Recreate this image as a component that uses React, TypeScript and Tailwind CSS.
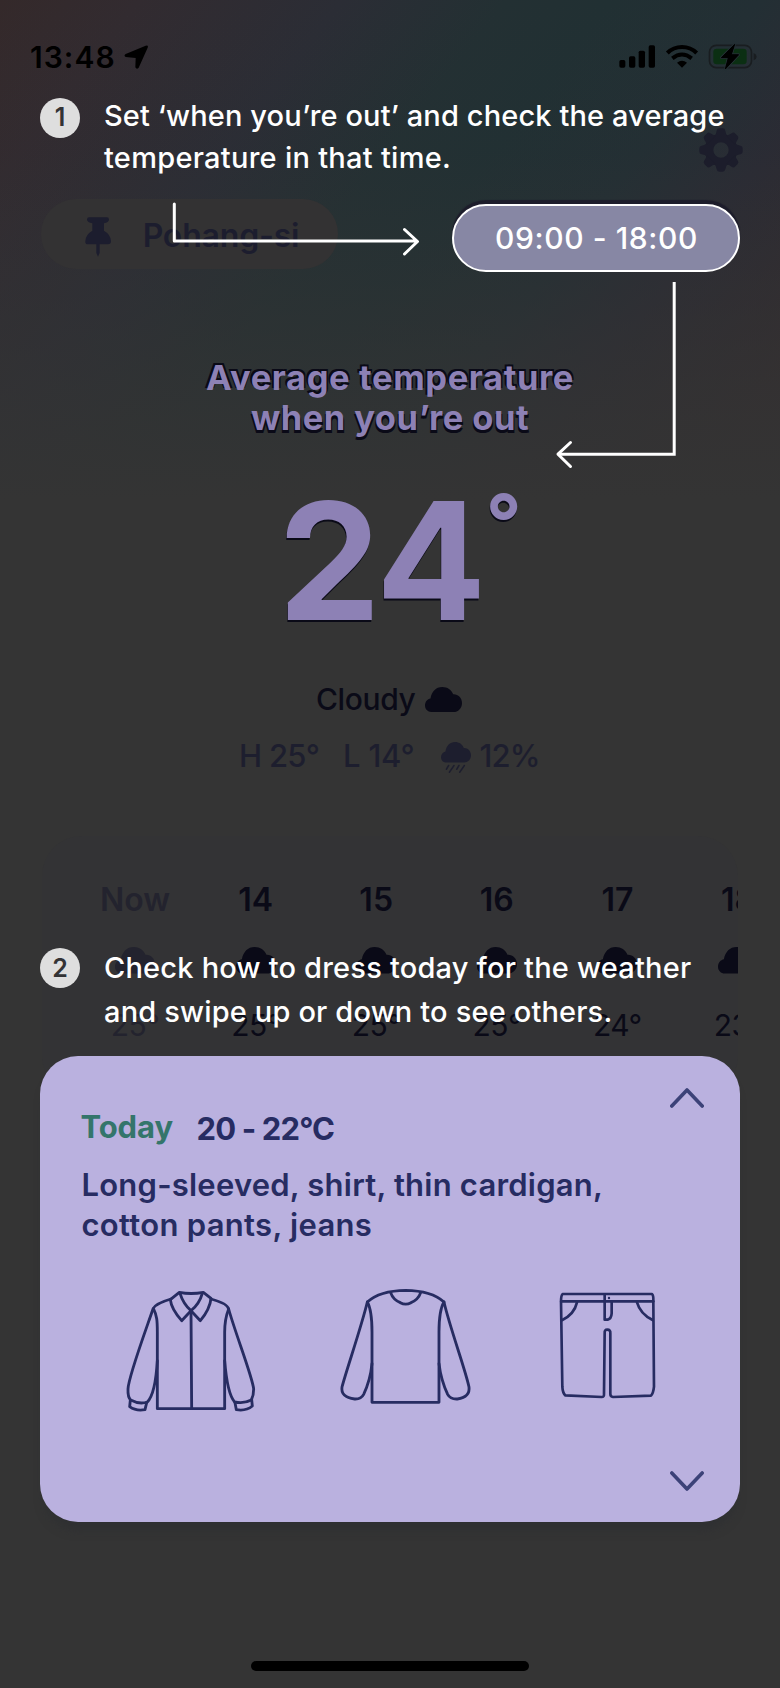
import type { ReactNode } from "react";

const CLOUD =
  "M21 82C9 82 0 73 0 61 0 49 8 40 18 38 22 15 36 0 57 0 74 0 87 9 93 24 109 23 122 36 122 53 122 70 109 82 94 82Z";

function Cloud({ className }: { className?: string }) {
  return (
    <svg viewBox="0 0 122 82" className={className} fill="currentColor" preserveAspectRatio="none">
      <path d={CLOUD} />
    </svg>
  );
}

function LocationArrow() {
  return (
    <svg viewBox="369 136 74 73" className="h-[24.3px] w-[24.7px] shrink-0" fill="#000">
      <path d="M434 138Q443 135 440 144L413 204Q407 211 403 203L404 175 374 172Q367 168 374 163Z" />
    </svg>
  );
}

function StatusIcons() {
  return (
    <svg viewBox="682 130 420 82" className="h-[27.33px] w-[140px] shrink-0">
      <g fill="#000">
        <rect x="686" y="181" width="18" height="23" rx="5" />
        <rect x="715" y="170" width="19" height="34" rx="5" />
        <rect x="744" y="153" width="19" height="51" rx="5" />
        <rect x="774" y="137" width="19" height="67" rx="5" />
      </g>
      <g fill="none" stroke="#000" strokeWidth="12">
        <path d="M830 160C854 136 894 136 918 160" />
        <path d="M845 176Q874 153 903 176" />
      </g>
      <path d="M859 189Q874 178 889 189L874 204Z" fill="#000" />
      <rect x="956.500" y="137" width="126" height="67" rx="20" fill="none" stroke="#191d20" strokeWidth="5" />
      <path d="M1089 160Q1098 164 1098 171 1098 178 1089 182Z" fill="#191d20" />
      <rect x="968" y="147" width="100" height="47" rx="10" fill="#0b2f13" />
      <path
        d="M1032 134L992 174H1013L1004 208 1044 165H1022Z"
        fill="#000"
        stroke="#232f33"
        strokeWidth="8"
        paintOrder="stroke"
        strokeLinejoin="round"
      />
      <path d="M1032 134L992 174H1013L1004 208 1044 165H1022Z" fill="#000" stroke="#000" strokeWidth="2.500" strokeLinejoin="round" />
    </svg>
  );
}

const TEETH = [0, 45, 90, 135, 180, 225, 270, 315];

function Gear() {
  return (
    <svg viewBox="-66 -66 132 132" className="size-[44px]" fill="#1c1d2b">
      <path fillRule="evenodd" d="M0-48A48 48 0 1 1 0 48A48 48 0 1 1 0-48ZM0-23A23 23 0 1 0 0 23A23 23 0 1 0 0-23Z" />
      {TEETH.map((a) => (
        <path key={a} transform={`rotate(${a})`} d="M-20-42Q-14-48-13-58-12-65-5-65H5Q12-65 13-58 14-48 20-42Z" />
      ))}
    </svg>
  );
}

function Pin() {
  return (
    <svg viewBox="256 650 79 120" className="h-[40px] w-[26.33px]" fill="#1c1d2e">
      <path d="M268 651H322Q328 651 328 658 327 666 313 669V691Q334 703 334 723 334 732 325 732H300V758L295 769 290 758V732H265Q256 732 257 723 257 703 278 691V669Q263 666 262 658 262 651 268 651Z" />
    </svg>
  );
}

function Shirt() {
  return (
    <svg viewBox="78 88 390 368" className="h-[122.67px] w-[130px]" fill="none" stroke="#272c62" strokeWidth="8.500" strokeLinejoin="round" strokeLinecap="round">
      <path d="M238 95Q273 102 310 95L333 113 Q330 145 301 180L273 150 245 180Q214 145 211 117Z" />
      <path d="M240 98Q250 130 273 150Q298 130 307 98" />
      <path d="M213 115Q168 128 160 143C171 165 172 180 172 215V444H374V215C374 180 378 165 386 145Q382 128 333 115" />
      <path d="M273 150L275 442" />
      <path d="M159 145C135 215 85 350 84 385Q83 410 92 418Q118 432 142 424Q166 400 172 300" />
      <path d="M386 145C405 215 458 350 461 385Q461 405 454 418Q432 430 404 424Q382 400 374 300" />
      <path d="M91 418L89 438Q108 452 135 447L140 426" />
      <path d="M455 417L457 436Q438 452 409 447L405 426" />
    </svg>
  );
}

function LongSleeve() {
  return (
    <svg viewBox="718 80 400 356" className="h-[118.67px] w-[133.33px]" fill="none" stroke="#272c62" strokeWidth="8.500" strokeLinejoin="round" strokeLinecap="round">
      <path d="M803 125Q840 91 918 90Q996 91 1033 125Q1018 150 1018 215V426H817V215Q817 150 803 125Z" />
      <path d="M873 97Q880 118 902 127Q918 136 934 127Q956 118 963 97" />
      <path d="M803 125C785 200 740 330 727 380Q722 410 765 416Q784 417 792 402Q812 360 817 310" />
      <path d="M1033 125C1050 200 1098 330 1108 380Q1112 410 1073 416Q1052 417 1044 402Q1024 360 1018 310" />
    </svg>
  );
}

function Pants() {
  return (
    <svg viewBox="176 96 292 320" className="h-[106.67px] w-[97.33px]" fill="none" stroke="#272c62" strokeWidth="8" strokeLinejoin="round" strokeLinecap="round">
      <path d="M187 102H455Q460 106 459 124L461 380Q459 400 452 407L338 411Q330 410 330 402V220Q331 209 321 209 312 209 313 220L311 402Q312 411 304 411L195 406Q187 400 186 380L182 124Q182 106 187 102Z" />
      <path d="M183 124H459" />
      <path d="M313 104V179H322Q333 176 334 160V124" />
      <path d="M230 127Q222 162 186 180M410 127Q420 162 457 180" />
      <circle cx="326" cy="114" r="3.500" fill="#272c62" stroke="none" />
    </svg>
  );
}

function Chevron({ down }: { down?: boolean }) {
  return (
    <svg viewBox="0 0 34 20" className="h-[20px] w-[34px]" fill="none" stroke="#3c4278" strokeWidth="3.600" strokeLinecap="round" strokeLinejoin="round">
      <path d={down ? "M1.800 2L17 18 32.200 2" : "M1.800 18L17 2 32.200 18"} />
    </svg>
  );
}

function Step({ n, className, children }: { n: number; className: string; children: ReactNode }) {
  return (
    <div className={`flex items-start text-[29px] font-medium text-white ${className}`}>
      <span className="mt-[2.700px] mr-[24px] flex size-[40px] shrink-0 items-center justify-center rounded-full bg-[#dedede] text-[25px] leading-none font-semibold text-[#333335]">
        {n}
      </span>
      <p className="whitespace-nowrap">{children}</p>
    </div>
  );
}

const HOURS = [
  { label: "Now", temp: "25°" },
  { label: "14", temp: "25°" },
  { label: "15", temp: "25°" },
  { label: "16", temp: "25°" },
  { label: "17", temp: "24°" },
  { label: "18", temp: "23°" },
];

export default function App() {
  return (
    <div className="relative flex h-[1688px] w-[780px] flex-col overflow-hidden bg-[linear-gradient(to_bottom,transparent_0px,rgba(52,52,52,0.05)_150px,rgba(52,52,52,0.35)_270px,rgba(52,52,52,0.75)_400px,#343434_500px),linear-gradient(128deg,#34292a_0px,#322b30_110px,#2b2d35_270px,#233033_400px,#213033_480px,#232f34_600px,#2a2b34_700px,#322a2d_850px)] bg-[#343434] font-['Inter',sans-serif]">
      {/* Status bar */}
      <header className="flex h-[80px] shrink-0 items-start justify-between pr-[22px] pl-[30px] pt-[37px]">
        <div className="flex items-start text-[30px] leading-[40px] font-semibold tracking-[1.05px] text-black">
          13:48
          <span className="mt-[8px] ml-[8px]">
            <LocationArrow />
          </span>
        </div>
        <span className="mt-[6.300px] flex">
          <StatusIcons />
        </span>
      </header>

      <div className="flex h-[119px] shrink-0 justify-end pt-[47.500px] pr-[37.500px]">
        <Gear />
      </div>

      {/* Location and outing hours */}
      <div className="flex h-[76px] shrink-0 items-start justify-between pr-[40px] pl-[41px]">
        <div className="flex h-[70px] w-[297px] items-start rounded-[35px] bg-[#333233] pl-[44px] text-[32px] leading-[40px] font-semibold tracking-[-0.180px] text-[#1c1d2e]">
          <span className="mt-[17.500px] flex">
            <Pin />
          </span>
          <span className="mt-[17px] ml-[31.300px]">Pohang-si</span>
        </div>
        <div className="mt-[5px] flex h-[68px] w-[288px] justify-center rounded-full border-2 border-white bg-[#8787a4] pl-[1px] text-[30px] leading-[64px] font-medium tracking-[0.600px] text-white shadow-[0_-4px_1px_#1d1d2b]">
          09:00 - 18:00
        </div>
      </div>

      {/* Average temperature */}
      <h1 className="mt-[82.500px] flex h-[80px] shrink-0 flex-col items-center text-[34.500px] leading-[40px] font-bold whitespace-nowrap text-[#8d81b5]">
        <span className="tracking-[0.620px] [text-shadow:-2px_-2px_0_#0a0a17,1.500px_-2px_0_#0a0a17]">Average temperature</span>
        <span className="tracking-[0.450px] [text-shadow:1px_2.800px_0_#0a0a17,-1px_2.500px_0_#0a0a17]">when you’re out</span>
      </h1>
      <div className="mt-[41px] flex h-[163px] shrink-0 items-start pl-[278px] font-bold text-[#8d81b5] [text-shadow:-0.500px_1.800px_0_#0a0a17]">
        <span className="text-[163px] leading-[163px] tracking-[-2.100px]">24</span>
        <span className="mt-[4px] ml-[1.500px] text-[78px] leading-[78px]">°</span>
      </div>

      {/* Conditions */}
      <div className="mt-[37.500px] flex h-[40px] shrink-0 items-start pl-[316px] text-[30px] leading-[40px] font-medium tracking-[-0.400px] text-[#0a0a17]">
        Cloudy
        <Cloud className="mt-[8px] ml-[10px] h-[25px] w-[37px]" />
      </div>
      <div className="mt-[16.500px] flex h-[40px] shrink-0 items-start pl-[239px] text-[31px] leading-[40px] font-medium text-[#1d1e2e]">
        <span className="w-[104px] tracking-[-0.700px]">H 25°</span>
        <span className="w-[98px] tracking-[-0.200px]">L 14°</span>
        <svg viewBox="0 0 122 124" className="mt-[6px] h-[31px] w-[30px]" fill="currentColor" preserveAspectRatio="none">
          <path d={CLOUD} />
          <path d="M31 94L22 109M53 94L34 121M73 94L64 109M95 94L76 121" stroke="currentColor" strokeWidth="6" strokeLinecap="round" />
        </svg>
        <span className="ml-[8.500px] tracking-[-0.900px]">12%</span>
      </div>

      {/* Hourly forecast */}
      <section className="mt-[60.500px] ml-[42px] h-[260px] w-[696px] shrink-0 overflow-hidden rounded-[40px] bg-[#333335] pt-[43.500px] pl-[32.700px]">
        <div className="flex w-[724px]">
          {HOURS.map(({ label, temp }, i) => (
            <div key={label} className={`flex w-[120.600px] shrink-0 flex-col items-center ${i === 0 ? "text-[#23232e]" : "text-[#0a0a17]"}`}>
              <span className="text-[32px] leading-[40px] font-semibold">{label}</span>
              <Cloud className="mt-[27.500px] h-[26.500px] w-[40px]" />
              <span className="mt-[31px] text-[30px] leading-[40px] tracking-[-0.500px]">{temp}</span>
            </div>
          ))}
        </div>
      </section>

      {/* Outfit card */}
      <section className="relative -mt-[40px] ml-[40px] flex h-[466px] w-[700px] shrink-0 flex-col rounded-[38px] bg-[#bab1df] text-[31px] leading-[40px] font-semibold text-[#272c62] shadow-[0_12px_10px_-4px_#2f3032]">
        <div className="flex h-[51px] justify-end pt-[31.500px] pr-[36px]">
          <Chevron />
        </div>
        <div className="flex h-[58px] pl-[40.500px]">
          <span className="w-[116px] font-bold tracking-[-0.100px] text-[#34756b]">Today</span>
          <span className="mt-[2px] font-bold tracking-[-0.850px]">20 - 22°C</span>
        </div>
        <p className="h-[80px] pl-[41.500px] tracking-[0.220px]">
          Long-sleeved, shirt, thin cardigan,
          <br />
          <span className="tracking-[0.300px]">cotton pants, jeans</span>
        </p>
        <div className="mt-[44.500px] flex h-[128.500px] items-start pl-[86px]">
          <span className="w-[213.300px]">
            <Shirt />
          </span>
          <span className="-mt-[2.700px] w-[219.300px]">
            <LongSleeve />
          </span>
          <span className="pt-[2.500px]">
            <Pants />
          </span>
        </div>
        <div className="flex justify-end pt-[52.500px] pr-[36px]">
          <Chevron down />
        </div>
      </section>

      {/* Home indicator */}
      <div className="mt-auto mb-[17px] ml-[251px] h-[10px] w-[278px] shrink-0 rounded-full bg-black" />

      {/* Walkthrough layer */}
      <div className="absolute inset-x-0 top-0 pt-[95px] pl-[40px]">
        <Step n={1} className="h-[84px] leading-[42px]">
          <span className="tracking-[0.120px]">Set ‘when you’re out’ and check the average</span>
          <br />
          <span className="tracking-[0.270px]">temperature in that time.</span>
        </Step>
        <Step n={2} className="mt-[766.500px] leading-[44px]">
          <span className="tracking-[0.200px]">Check how to dress today for the weather</span>
          <br />
          <span className="tracking-[0.160px]">and swipe up or down to see others.</span>
        </Step>
      </div>
      <svg viewBox="0 0 780 500" className="absolute top-0 left-0 h-[500px] w-[780px]" fill="none" stroke="#fff" strokeWidth="3" strokeLinecap="round" strokeLinejoin="round">
        <path d="M174.300 204V241H417M404.500 229.500L417.500 241.500 404.500 254" />
        <path d="M674.200 282V454.200H559" strokeLinecap="butt" strokeLinejoin="miter" />
        <path d="M570.500 442.500L558 454.200 570.500 466.500" />
      </svg>
    </div>
  );
}
